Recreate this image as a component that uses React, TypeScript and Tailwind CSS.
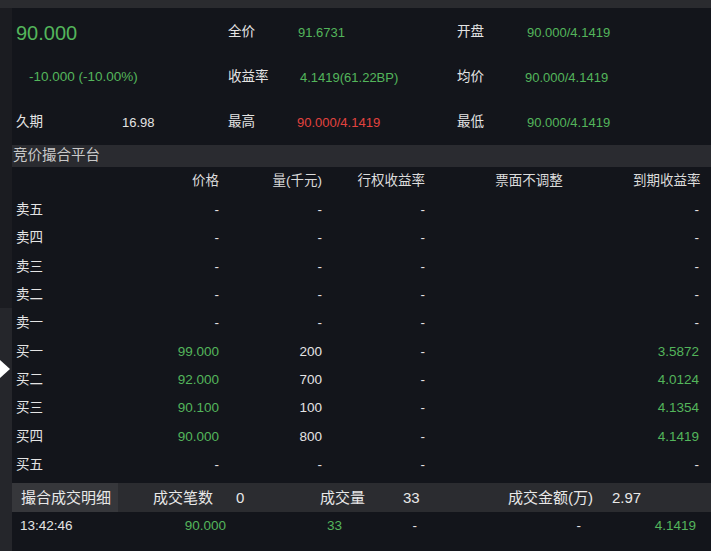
import React from "react";

const GREEN = "text-[#53b55b]";
const RED = "text-[#e2433f]";

type Cell = { v: string; green?: boolean };

const book: { label: string; price: Cell; qty: string; ex: string; ytm: Cell }[] = [
  { label: "卖五", price: { v: "-" }, qty: "-", ex: "-", ytm: { v: "-" } },
  { label: "卖四", price: { v: "-" }, qty: "-", ex: "-", ytm: { v: "-" } },
  { label: "卖三", price: { v: "-" }, qty: "-", ex: "-", ytm: { v: "-" } },
  { label: "卖二", price: { v: "-" }, qty: "-", ex: "-", ytm: { v: "-" } },
  { label: "卖一", price: { v: "-" }, qty: "-", ex: "-", ytm: { v: "-" } },
  { label: "买一", price: { v: "99.000", green: true }, qty: "200", ex: "-", ytm: { v: "3.5872", green: true } },
  { label: "买二", price: { v: "92.000", green: true }, qty: "700", ex: "-", ytm: { v: "4.0124", green: true } },
  { label: "买三", price: { v: "90.100", green: true }, qty: "100", ex: "-", ytm: { v: "4.1354", green: true } },
  { label: "买四", price: { v: "90.000", green: true }, qty: "800", ex: "-", ytm: { v: "4.1419", green: true } },
  { label: "买五", price: { v: "-" }, qty: "-", ex: "-", ytm: { v: "-" } },
];

const cols = "grid grid-cols-[104px_99px_103px_103px_208px_1fr] pl-1 pr-3";

function Stat({ label, value, color }: { label: string; value: string; color: string }) {
  return (
    <div className="flex items-center">
      <span className="w-[70px] text-[13.5px] text-[#e4e4e4]">{label}</span>
      <span className={`text-[13px] ${color}`}>{value}</span>
    </div>
  );
}

export default function App() {
  return (
    <div
      className="w-[711px] h-[551px] overflow-hidden bg-[#13151b] flex flex-col"
      style={{ fontFamily: '"Liberation Sans", "Noto Sans CJK SC", sans-serif' }}
    >
      <div className="h-[8px] shrink-0 bg-[#2a2b2f]" />
      <div className="flex flex-1 min-h-0">
        {/* left rail */}
        <div className="relative w-[12px] shrink-0 flex flex-col">
          <div className="h-[300px] bg-[#1b1c21]" />
          <div className="flex-1 bg-[#25262b]" />
          <div className="absolute left-0 top-[352px] w-0 h-0 border-y-[9px] border-y-transparent border-l-[10px] border-l-white" />
        </div>

        <div className="flex-1 flex flex-col min-w-0">
          {/* quote summary */}
          <div className="h-[137px] shrink-0 pt-[2px] grid grid-cols-[216px_229px_1fr] grid-rows-[45px_45px_45px] items-center">
            <div className={`pl-1 text-[20px] ${GREEN}`}>90.000</div>
            <Stat label="全价" value="91.6731" color={GREEN} />
            <Stat label="开盘" value="90.000/4.1419" color={GREEN} />

            <div className={`pl-[17px] text-[13.5px] ${GREEN}`}>-10.000 (-10.00%)</div>
            <div className="flex items-center">
              <span className="w-[72px] text-[13.5px] text-[#e4e4e4]">收益率</span>
              <span className={`text-[13px] ${GREEN}`}>4.1419(61.22BP)</span>
            </div>
            <div className="flex items-center">
              <span className="w-[68px] text-[13.5px] text-[#e4e4e4]">均价</span>
              <span className={`text-[13px] ${GREEN}`}>90.000/4.1419</span>
            </div>

            <div className="pl-1 flex items-center">
              <span className="w-[106px] text-[13.5px] text-[#e4e4e4]">久期</span>
              <span className="text-[13px] text-[#e4e4e4]">16.98</span>
            </div>
            <div className="flex items-center">
              <span className="w-[69px] text-[13.5px] text-[#e4e4e4]">最高</span>
              <span className={`text-[13px] ${RED}`}>90.000/4.1419</span>
            </div>
            <Stat label="最低" value="90.000/4.1419" color={GREEN} />
          </div>

          {/* section title */}
          <div className="h-[22px] shrink-0 bg-[#2a2b30] flex items-center pl-px text-[14.5px] text-[#c9c9c9]">
            竞价撮合平台
          </div>

          {/* order book */}
          <div className={`${cols} h-[29px] shrink-0 items-center text-[13.5px] text-[#dcdcdc]`}>
            <span />
            <span className="flex justify-end">价格</span>
            <span className="flex justify-end">量(千元)</span>
            <span className="flex justify-end whitespace-nowrap">行权收益率</span>
            <span className="flex justify-center">票面不调整</span>
            <span className="flex justify-end whitespace-nowrap">到期收益率</span>
          </div>
          <div className="flex flex-col shrink-0">
            {book.map((r) => (
              <div key={r.label} className={`${cols} h-[28.33px] items-center text-[13.5px] text-[#e4e4e4]`}>
                <span>{r.label}</span>
                <span className={`flex justify-end ${r.price.green ? GREEN : ""}`}>{r.price.v}</span>
                <span className="flex justify-end">{r.qty}</span>
                <span className="flex justify-end">{r.ex}</span>
                <span />
                <span className={`flex justify-end ${r.ytm.green ? GREEN : ""}`}>{r.ytm.v}</span>
              </div>
            ))}
          </div>

          {/* trade summary bar */}
          <div className="mt-[4px] h-[29px] shrink-0 bg-[#2b2c30] flex items-center text-[15px] text-[#e8e8e8]">
            <div className="h-full w-[106px] bg-[#36373b] flex items-center pl-[9px]">撮合成交明细</div>
            <span className="ml-[35px] w-[83px]">成交笔数</span>
            <span className="w-[84px]">0</span>
            <span className="w-[83px]">成交量</span>
            <span className="w-[105px]">33</span>
            <span className="w-[104px]">成交金额(万)</span>
            <span>2.97</span>
          </div>

          {/* trade detail */}
          <div className="h-[28px] shrink-0 grid grid-cols-[110px_96px_116px_75px_164px_1fr] items-center pl-2 pr-[15px] text-[13.5px] text-[#e4e4e4]">
            <span>13:42:46</span>
            <span className={`flex justify-end ${GREEN}`}>90.000</span>
            <span className={`flex justify-end ${GREEN}`}>33</span>
            <span className="flex justify-end">-</span>
            <span className="flex justify-end">-</span>
            <span className={`flex justify-end ${GREEN}`}>4.1419</span>
          </div>
        </div>
      </div>
    </div>
  );
}
